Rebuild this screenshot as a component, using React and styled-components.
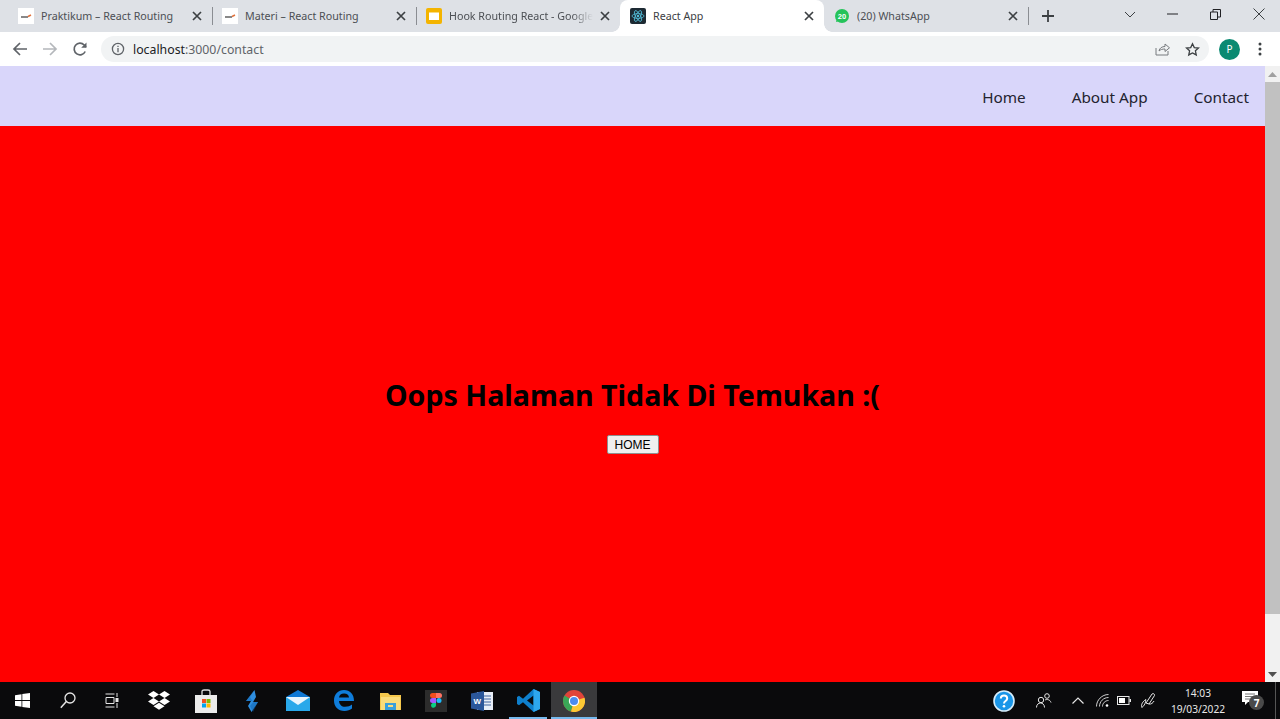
import React from "react";
import styled, { createGlobalStyle } from "styled-components";

const Global = createGlobalStyle`
  html, body { margin: 0; padding: 0; height: 100%; overflow: hidden; }
  #root { height: 100%; }
`;
const UI = `"Noto Sans", "Open Sans", "Liberation Sans", sans-serif`;

const Shell = styled.div`
  width: 1280px; height: 719px; display: grid; grid-template-rows: 32px 34px 616px 37px;
  font-family: ${UI}; overflow: hidden;
`;
const TabStrip = styled.div`
  background: #dee1e6; display: flex; padding-left: 8px; align-items: stretch;
`;
const Tab = styled.div`
  width: 204px; box-sizing: border-box; display: flex; align-items: center; gap: 7px;
  padding: 0 9px 0 10px; position: relative; flex: none;
  &::after {
    content: ""; position: absolute; right: -1px; top: 7px; height: 18px; width: 1px;
    background: ${p => (p.$sep ? "#8a8d92" : "transparent")};
  }
`;
const ActiveTab = styled(Tab)`
  background: #fff; border-radius: 8px 8px 0 0;
  &::before, &::after {
    content: ""; position: absolute; bottom: 0; top: auto; width: 8px; height: 8px;
    background: radial-gradient(circle at ${p => "var(--cx)"} 0, transparent 7.5px, #fff 8px);
  }
  &::before { left: -8px; right: auto; --cx: 0; }
  &::after { right: -8px; --cx: 100%; width: 8px; }
`;
const TabTitle = styled.span`
  flex: 1; min-width: 0; white-space: nowrap; overflow: hidden; font-size: 10.7px; color: ${p => (p.$active ? "#3c4043" : "#4c4f54")};
  ${p => p.$fade && `-webkit-mask-image: linear-gradient(90deg,#000 85%,transparent 100%);`}
`;
const Fav = styled.svg`width: 16px; height: 16px; flex: none;`;
const CloseGlyph = styled.svg`width: 10px; height: 10px; flex: none; margin-right: 1px;`;
const NewTab = styled.svg`width: 14px; height: 14px; margin: 0 0 0 13px; flex: none; align-self: center;`;
const WinControls = styled.div`
  margin-left: auto; display: flex; align-items: flex-start;
`;
const WinBtn = styled.div`
  width: 43px; height: 28px; display: flex; align-items: center; justify-content: center;
`;
const Toolbar = styled.div`
  background: #fff; display: flex; align-items: center;
`;
const NavIcon = styled.svg`width: 16px; height: 16px; flex: none; margin-left: ${p => p.$ml || 0}px;`;
const Omnibox = styled.div`
  margin-left: 13px; width: 1108px; height: 26px; box-sizing: border-box; background: #f1f3f4; border-radius: 13px;
  display: flex; align-items: center; padding: 0 9px 0 10px;
`;
const Url = styled.div`
  margin-left: 8px; font-size: 12.3px; color: #5f6368; flex: 1; b { font-weight: 400; color: #202124; }
`;
const Avatar = styled.div`
  width: 21px; height: 21px; border-radius: 50%; background: #0b8a72; color: #fff; font-size: 10px;
  display: flex; align-items: center; justify-content: center; margin-left: 10px; flex: none;
`;
const Viewport = styled.div`
  display: grid; grid-template-columns: 1265px 15px; min-height: 0;
`;
const Page = styled.div`
  background: #ff0000; display: flex; flex-direction: column; min-height: 0;
`;
const TopNav = styled.nav`
  height: 60px; flex: none; background: #d9d6fa; display: flex; align-items: center; justify-content: flex-end;
  gap: 46px; padding: 2px 16px 0 0; box-sizing: border-box; font-size: 15.3px; color: #23232f;
`;
const NotFound = styled.main`
  flex: 1; display: flex; flex-direction: column; align-items: center; justify-content: center; padding-top: 22px;
`;
const Heading = styled.h1`
  margin: 0 0 21px; font-size: 28.6px; line-height: 38px; font-weight: 700; color: #000; font-family: ${UI};
`;
const HomeButton = styled.button`
  width: 52px; height: 19px; padding: 0; box-sizing: border-box; background: #efefef; border: 1px solid #8f8f8f; border-radius: 2px;
  font-family: "Liberation Sans", sans-serif; font-size: 12px; color: #000;
`;
const Scrollbar = styled.div`
  background: #f1f1f1; display: flex; flex-direction: column; align-items: center;
`;
const ScrollArrow = styled.div`
  height: 16px; flex: none; display: flex; align-items: center; justify-content: center;
`;
const Thumb = styled.div`
  width: 100%; height: 532px; flex: none; background: #c1c1c1;
`;
const Spacer = styled.div`flex: 1;`;
const Taskbar = styled.footer`
  background: #0a0a0c; display: flex; align-items: center; position: relative;
`;
const Slot = styled.div`
  width: ${p => p.$w || 46}px; height: 37px; flex: none; display: flex; align-items: center; justify-content: center;
  background: ${p => (p.$active ? "#3a3a3c" : "transparent")}; position: relative;
  ${p => p.$bar && `&::after { content:""; position:absolute; bottom:0; left:${p.$active ? 0 : 4}px; right:${p.$active ? 0 : 4}px; height:2px; background:#76b9ed; }`}
`;
const TrayIcon = styled.div`
  width: ${p => p.$w}px; height: 37px; flex: none; display: flex; align-items: center; justify-content: center;
  svg { flex: none; }
`;
const Clock = styled.div`
  width: 70px; flex: none; text-align: center; color: #e8e8e8; font-size: 10.2px; line-height: 16px;
`;
const Tray = styled.div`
  margin-left: auto; display: flex; align-items: center; height: 37px; padding-right: 4px;
`;
const Badge = styled.span`
  position: absolute; left: 16px; top: 13px; width: 15px; height: 15px; border-radius: 50%;
  background: #4a4a4a; color: #fff; font-size: 10px; font-weight: 700; display: flex; align-items: center; justify-content: center;
`;
const EndLine = styled.div`width: 1px; height: 37px; background: #555; margin-left: 8px; flex: none;`;

const Close = ({ c = "#3c4043" }) => (
  <CloseGlyph viewBox="0 0 10 10"><path d="M1 1l8 8M9 1L1 9" stroke={c} strokeWidth="1.7" fill="none" /></CloseGlyph>
);
const DocFav = () => (
  <Fav viewBox="0 0 16 16"><rect width="16" height="16" fill="#fff" /><path d="M3 9h7" stroke="#555" strokeWidth="1.4" /><path d="M10 8.5l3-1.5" stroke="#e2703a" strokeWidth="1.4" /></Fav>
);
const SlidesFav = () => (
  <Fav viewBox="0 0 16 16"><rect width="16" height="16" rx="2" fill="#f4b400" /><rect x="3" y="4.5" width="10" height="7.5" fill="#fff" /></Fav>
);
const ReactFav = () => (
  <Fav viewBox="0 0 16 16"><rect width="16" height="16" rx="2" fill="#1d2a33" /><g fill="none" stroke="#53c1de" strokeWidth=".8"><ellipse cx="8" cy="8" rx="6" ry="2.4" /><ellipse cx="8" cy="8" rx="6" ry="2.4" transform="rotate(60 8 8)" /><ellipse cx="8" cy="8" rx="6" ry="2.4" transform="rotate(120 8 8)" /></g><circle cx="8" cy="8" r="1.2" fill="#53c1de" /></Fav>
);
const WaFav = () => (
  <Fav viewBox="0 0 16 16"><circle cx="8" cy="8" r="7" fill="#25c35a" /><path d="M2 14l1-4 3 3z" fill="#25c35a" /><text x="8" y="10.6" textAnchor="middle" fontSize="7.5" fontWeight="700" fill="#fff" fontFamily="Liberation Sans">20</text></Fav>
);

export default function App() {
  return (
    <Shell>
      <Global />
      <TabStrip>
        <Tab $sep><DocFav /><TabTitle>Praktikum – React Routing</TabTitle><Close /></Tab>
        <Tab $sep><DocFav /><TabTitle>Materi – React Routing</TabTitle><Close /></Tab>
        <Tab><SlidesFav /><TabTitle $fade>Hook Routing React - Google Slides</TabTitle><Close /></Tab>
        <ActiveTab><ReactFav /><TabTitle $active>React App</TabTitle><Close /></ActiveTab>
        <Tab $sep><WaFav /><TabTitle>(20) WhatsApp</TabTitle><Close /></Tab>
        <NewTab viewBox="0 0 14 14"><path d="M7 1v12M1 7h12" stroke="#3c4043" strokeWidth="1.8" /></NewTab>
        <WinControls>
          <WinBtn><svg width="12" height="7" viewBox="0 0 12 7"><path d="M1 1l5 5 5-5" stroke="#3c4043" fill="none" /></svg></WinBtn>
          <WinBtn><svg width="11" height="2" viewBox="0 0 11 2"><path d="M0 1h11" stroke="#202124" /></svg></WinBtn>
          <WinBtn><svg width="11" height="11" viewBox="0 0 11 11"><path d="M.5 3h7v7.5h-7zM3 3V.5h7.5V8H8" fill="none" stroke="#202124" /></svg></WinBtn>
          <WinBtn><svg width="12" height="12" viewBox="0 0 12 12"><path d="M.5.5l11 11M11.5.5l-11 11" stroke="#3c4043" /></svg></WinBtn>
        </WinControls>
      </TabStrip>
      <Toolbar>
        <NavIcon $ml={12} viewBox="0 0 16 16"><path d="M15 8H2M8 2L2 8l6 6" fill="none" stroke="#5f6368" strokeWidth="1.7" /></NavIcon>
        <NavIcon $ml={14} viewBox="0 0 16 16"><path d="M1 8h13M8 2l6 6-6 6" fill="none" stroke="#b4b7bb" strokeWidth="1.7" /></NavIcon>
        <NavIcon $ml={14} viewBox="0 0 16 16"><path d="M13.2 10.5A5.8 5.8 0 1 1 12.2 4L14 6" fill="none" stroke="#5f6368" strokeWidth="1.7" /><path d="M14.5 1.5v5.3H9.2z" fill="#5f6368" /></NavIcon>
        <Omnibox>
          <svg width="14" height="14" viewBox="0 0 14 14"><circle cx="7" cy="7" r="5.6" fill="none" stroke="#5f6368" strokeWidth="1.3" /><path d="M7 6v4.2M7 3.8v1.3" stroke="#5f6368" strokeWidth="1.3" /></svg>
          <Url><b>localhost</b>:3000/contact</Url>
          <svg width="16" height="14" viewBox="0 0 16 14"><path d="M1 6v7h12V9" fill="none" stroke="#777a7e" /><path d="M4 9c.5-3 3-4.5 6-4.5V2l4.5 3.8L10 9.500V7C7.500 7 5.500 7.500 4 9z" fill="none" stroke="#777a7e" /></svg>
          <svg style={{ marginLeft: 14 }} width="15" height="15" viewBox="0 0 16 16"><path d="M8 1.800l1.900 4.100 4.500.5-3.300 3 .9 4.400L8 11.600l-4 2.200.9-4.400-3.300-3 4.500-.5z" fill="none" stroke="#3c4043" strokeWidth="1.4" /></svg>
        </Omnibox>
        <Avatar>P</Avatar>
        <svg style={{ marginLeft: 18 }} width="4" height="14" viewBox="0 0 4 14"><g fill="#3c4043"><circle cx="2" cy="2" r="1.500" /><circle cx="2" cy="7" r="1.500" /><circle cx="2" cy="12" r="1.500" /></g></svg>
      </Toolbar>
      <Viewport>
        <Page>
          <TopNav><span>Home</span><span>About App</span><span>Contact</span></TopNav>
          <NotFound>
            <Heading>Oops Halaman Tidak Di Temukan :(</Heading>
            <HomeButton>HOME</HomeButton>
          </NotFound>
        </Page>
        <Scrollbar>
          <ScrollArrow><svg width="9" height="5" viewBox="0 0 9 5"><path d="M4.500 0L9 5H0z" fill="#a0a0a0" /></svg></ScrollArrow>
          <Thumb />
          <Spacer />
          <ScrollArrow><svg width="9" height="5" viewBox="0 0 9 5"><path d="M4.500 5L9 0H0z" fill="#505050" /></svg></ScrollArrow>
        </Scrollbar>
      </Viewport>
      <Taskbar>
        <Slot $w={45}>
          <svg width="15" height="15" viewBox="0 0 15 15"><path d="M0 2.200l6.500-1V7H0zM7.300 1l7.700-1v7H7.300zM0 8h6.500v5.800l-6.500-1zM7.300 8H15v7l-7.700-1.100z" fill="#fff" /></svg>
        </Slot>
        <Slot>
          <svg width="16" height="17" viewBox="0 0 16 17"><circle cx="10" cy="6" r="5" fill="none" stroke="#e6e6e6" strokeWidth="1.300" /><path d="M6.300 9.500L.8 15.800" stroke="#e6e6e6" strokeWidth="1.500" /></svg>
        </Slot>
        <Slot $w={44}>
          <svg width="16" height="15" viewBox="0 0 16 15"><path d="M.5 1h9M.5 14h9M1 4.500h8v6H1z M12 0v4M12 10v5" fill="none" stroke="#e6e6e6" /><rect x="10.500" y="5" width="3" height="4" fill="#e6e6e6" /></svg>
        </Slot>
        <Slot $w={48}>
          <svg width="22" height="19" viewBox="0 0 22 19" fill="#fff"><path d="M5.500 0L0 3.500 5.500 7 11 3.500zM16.500 0L11 3.500 16.500 7 22 3.500zM0 10.500L5.500 14 11 10.500 5.500 7zM16.500 7L11 10.500l5.500 3.500 5.500-3.500z" /><path d="M5.500 15.200L11 18.800l5.500-3.600L11 11.700z" /></svg>
        </Slot>
        <Slot>
          <svg width="22" height="24" viewBox="0 0 22 24"><rect x="0" y="6" width="22" height="18" fill="#ececec" /><path d="M7 6V2.500C7 1.500 8 1 9 1h4c1 0 2 .5 2 1.500V6" fill="none" stroke="#ddd" strokeWidth="1.300" /><rect x="7" y="10" width="4" height="4" fill="#f25022" /><rect x="11.500" y="10" width="4" height="4" fill="#7fba00" /><rect x="7" y="14.500" width="4" height="4" fill="#00a4ef" /><rect x="11.500" y="14.500" width="4" height="4" fill="#ffb900" /></svg>
        </Slot>
        <Slot>
          <svg width="14" height="22" viewBox="0 0 14 22"><path d="M9.500 0L1 11h5l-3 5 3.500 6L13 12H8l3-5z" fill="#2f8fe0" /><path d="M9.500 0L5 7l3 5h5L8 22 5 16 9 11H1z" fill="#0b5ea8" opacity=".45" /></svg>
        </Slot>
        <Slot>
          <svg width="24" height="21" viewBox="0 0 24 21"><path d="M0 7L12 0l12 7v14H0z" fill="#0f78d4" /><path d="M0 7h24v14H0z" fill="#29a8ea" /><path d="M0 7l12 8 12-8" fill="#e9f5fd" /></svg>
        </Slot>
        <Slot>
          <svg width="20" height="21" viewBox="0 0 20 21"><path d="M10 0c6 0 10 4 10 11H5c.3 3.500 2.600 5.800 6 5.800 3 0 5-1 7-2.300v4C16 20 13.500 21 10.500 21 4 21 0 16.600 0 10.500S4 0 10 0zm5 7.500C14.800 5 13 3.500 10 3.500S5.500 5 5 7.500z" fill="#0f7ddb" /></svg>
        </Slot>
        <Slot>
          <svg width="21" height="18" viewBox="0 0 21 18"><path d="M0 1h8l2 2h11v15H0z" fill="#f5c84c" /><path d="M1 5h19v13H1z" fill="#fbdc7a" /><rect x="5" y="11" width="11" height="7" fill="#3aa0dc" /><rect x="8" y="13" width="5" height="2" fill="#fbdc7a" /></svg>
        </Slot>
        <Slot>
          <svg width="22" height="22" viewBox="0 0 22 22"><rect width="22" height="22" fill="#2c2c2c" /><path d="M7.500 3H11v5H7.500a2.500 2.500 0 0 1 0-5z" fill="#f24e1e" /><path d="M11 3h3.500a2.500 2.500 0 0 1 0 5H11z" fill="#ff7262" /><path d="M7.500 8H11v5H7.500a2.500 2.500 0 0 1 0-5z" fill="#a259ff" /><circle cx="14" cy="10.500" r="2.500" fill="#1abcfe" /><path d="M7.500 13H11v2.500a2.500 2.500 0 1 1-3.500-2.500z" fill="#0acf83" /></svg>
        </Slot>
        <Slot>
          <svg width="22" height="20" viewBox="0 0 22 20"><rect x="6" y="1" width="16" height="18" fill="#e8eef7" /><path d="M13 5h7M13 8h7M13 11h7M13 14h7" stroke="#41659f" /><path d="M0 2.500L13 0v20L0 17.500z" fill="#2b579a" /><text x="6.300" y="13" textAnchor="middle" fontSize="8" fontWeight="700" fill="#fff" fontFamily="Liberation Sans">W</text></svg>
        </Slot>
        <Slot $bar>
          <svg width="23" height="23" viewBox="0 0 23 23"><path d="M16.500 0L23 3v17l-6.500 3L6 13.200 2 16.300 0 15V8l2-1.300 4 3.100z" fill="#0e7fcc" /><path d="M16.500 6.500L10 11.500l6.500 5z" fill="#0a0a0c" /><path d="M16.500 0L23 3v17l-6.500 3z" fill="#2da7ee" /></svg>
        </Slot>
        <Slot $active $bar>
          <svg width="22" height="22" viewBox="0 0 22 22"><circle cx="11" cy="11" r="11" fill="#e0443a" /><path d="M11 11L1.500 5.500A11 11 0 0 0 8 21.600z" fill="#3aa757" /><path d="M11 11l10.500-3.200A11 11 0 0 1 8 21.600z" fill="#fcc934" /><circle cx="11" cy="11" r="5.200" fill="#fff" /><circle cx="11" cy="11" r="4" fill="#4a8cf0" /></svg>
        </Slot>
        <Tray>
          <TrayIcon $w={38}>
            <svg width="22" height="22" viewBox="0 0 22 22"><circle cx="11" cy="11" r="10" fill="#1a96e8" stroke="#d6eefc" strokeWidth="1.600" /><path d="M7.800 8.500c0-4 6.400-4 6.400 0 0 2.600-3.200 2.500-3.200 5" fill="none" stroke="#fff" strokeWidth="2" /><circle cx="11" cy="16.300" r="1.300" fill="#fff" /></svg>
          </TrayIcon>
          <TrayIcon $w={42}>
            <svg width="16" height="15" viewBox="0 0 16 15"><circle cx="5" cy="7" r="2.700" fill="none" stroke="#e6e6e6" /><path d="M.5 14.500c0-6 8-6 8 0" fill="none" stroke="#e6e6e6" /><circle cx="11" cy="3" r="2.300" fill="none" stroke="#e6e6e6" /><path d="M9 7c2-1 5-.5 6 2.500" fill="none" stroke="#e6e6e6" /></svg>
          </TrayIcon>
          <TrayIcon $w={26}>
            <svg width="12" height="7" viewBox="0 0 12 7"><path d="M.5 6.500L6 1l5.500 5.500" fill="none" stroke="#e6e6e6" strokeWidth="1.200" /></svg>
          </TrayIcon>
          <TrayIcon $w={22}>
            <svg width="13" height="13" viewBox="0 0 13 13"><path d="M.5 12.500C.5 6 6 .5 12.500.5M3.500 12.500C3.500 7.500 7.500 3.500 12.500 3.500M6.500 12.500c0-3.300 2.700-6 6-6" fill="none" stroke="#cfcfcf" /><circle cx="11" cy="11.500" r="1.300" fill="#fff" /></svg>
          </TrayIcon>
          <TrayIcon $w={22}>
            <svg width="14" height="9" viewBox="0 0 14 9"><rect x=".5" y=".5" width="11.500" height="8" fill="none" stroke="#e6e6e6" /><rect x="2" y="2" width="6" height="5" fill="#fff" /><rect x="12.500" y="3" width="1.500" height="3" fill="#e6e6e6" /></svg>
          </TrayIcon>
          <TrayIcon $w={28}>
            <svg width="16" height="15" viewBox="0 0 16 15"><path d="M.8 14.500c-1-3 1-6 4-8 0 3-1 6-4 8zM5 10l6-9c1-1 3 0 2.500 1.500L8 11zM8 11c2 .5 4-1 5-3" fill="none" stroke="#e6e6e6" /></svg>
          </TrayIcon>
          <Clock>14:03<br />19/03/2022</Clock>
          <Slot $w={34}>
            <svg width="16" height="14" viewBox="0 0 16 14" style={{ marginTop: -5 }}><path d="M0 0h16v11H6l-3 3v-3H0z" fill="#fff" /><path d="M3 3h10M3 5.500h10M3 8h6" stroke="#777" /></svg>
            <Badge>7</Badge>
          </Slot>
          <EndLine />
        </Tray>
      </Taskbar>
    </Shell>
  );
}
